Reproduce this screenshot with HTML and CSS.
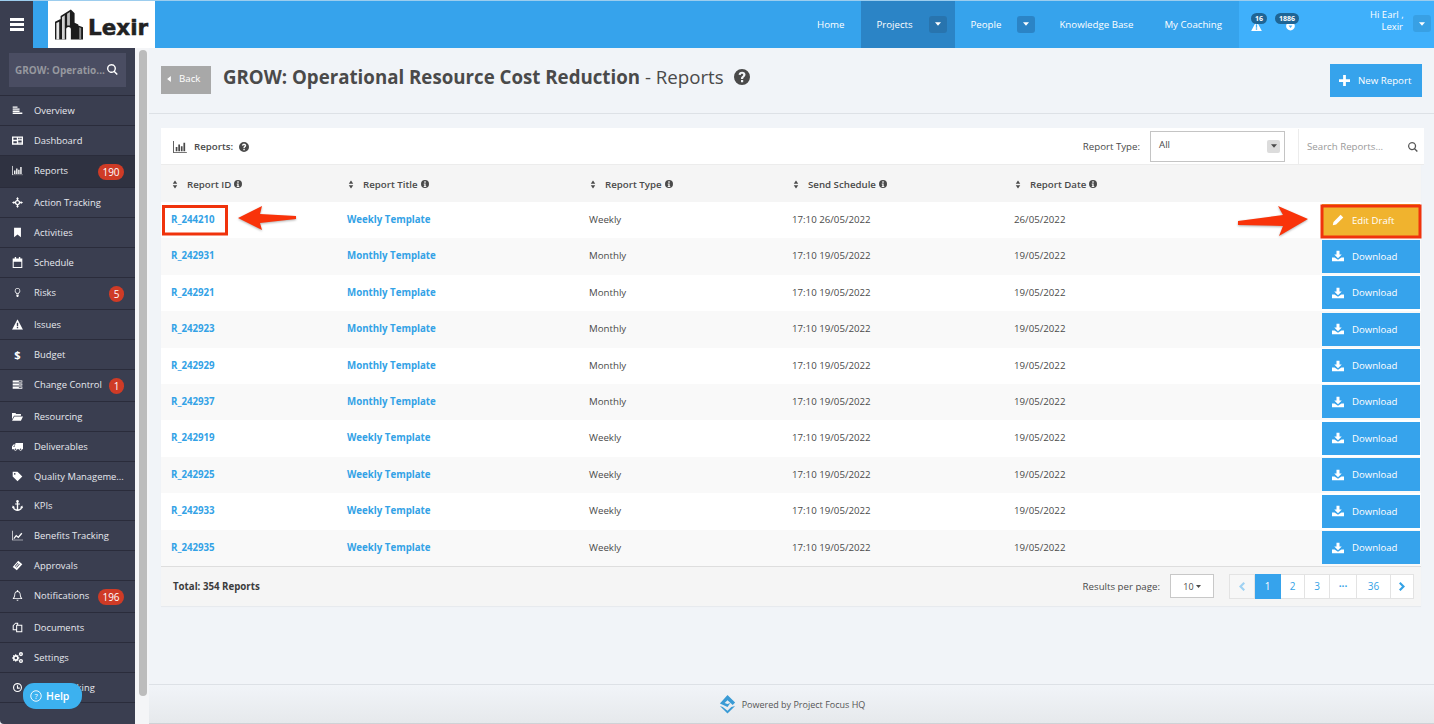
FILE: index.html
```html
<!DOCTYPE html>
<html lang="en">
<head>
<meta charset="utf-8">
<title>Reports</title>
<link rel="stylesheet" href="styles.css">
</head>
<body>
<svg class="sprite" width="0" height="0">
  <symbol id="i-info" viewBox="0 0 16 16"><path fill-rule="evenodd" d="M8 0a8 8 0 1 1 0 16A8 8 0 0 1 8 0zM6.500 2.500v3h3v-3zM5.500 7v2h1.200v3H5.500v2h5v-2H9.300V7z"/></symbol>
  <symbol id="i-help" viewBox="0 0 16 16"><path fill-rule="evenodd" d="M8 0a8 8 0 1 1 0 16A8 8 0 0 1 8 0zM7 11v2.200h2.200V11zM8.100 2.800c-2 0-3.300 1-3.500 2.900l2.100.3c.1-.9.600-1.300 1.300-1.300s1.200.4 1.200 1c0 1.300-2.300 1.400-2.200 4.300h2.100c0-1.900 2.400-2 2.400-4.400 0-1.700-1.500-2.800-3.400-2.800z"/></symbol>
  <symbol id="i-sort" viewBox="0 0 10 16"><path d="M5 1l4 5.500H1zM5 15l-4-5.500h8z"/></symbol>
  <symbol id="i-bars" viewBox="0 0 16 14"><path d="M0 0h1v13h15v1H0zM3 7h2v5H3zM6 4h2v8H6zM9 6h2v6H9zM12 2h2v10h-2z"/></symbol>
  <symbol id="i-search" viewBox="0 0 16 16"><path fill-rule="evenodd" d="M6.500 0a6.500 6.500 0 0 1 5.200 10.400l4 4-1.500 1.500-4-4A6.500 6.500 0 1 1 6.500 0zm0 2a4.500 4.500 0 1 0 0 9 4.500 4.500 0 0 0 0-9z"/></symbol>
  <symbol id="i-download" viewBox="0 0 16 16"><path d="M6 1h4v5h3L8 11 3 6h3zM0 10h3.500L8 13l4.500-3H16v5H0z"/></symbol>
  <symbol id="i-caret" viewBox="0 0 10 6"><path d="M0 0h10L5 6z"/></symbol>
  <symbol id="i-warn" viewBox="0 0 16 15"><path fill-rule="evenodd" d="M8 0l8 15H0zM7 5v5h2V5zm0 6v2h2v-2z"/></symbol>
</svg>

<div class="app">
  <header class="topbar">
    <button class="burger" aria-label="Menu"><span></span><span></span><span></span></button>
    <div class="logo-gap"></div>
    <div class="logo">
      <svg class="logo-mark" viewBox="0 0 30 32">
        <defs><linearGradient id="lg" x1="0" x2="1" y1="0" y2="0"><stop offset="0" stop-color="#eeeeee"/><stop offset="1" stop-color="#8a8a8a"/></linearGradient></defs>
        <path fill="#1c1c1c" d="M0 13l6-3v22H0zM6 7L17 0l4 4v28h-4V21c0-3-5-3-5 0v11H6zM21 14l4 2v16h-4zM25 17l5 2v13h-5z"/>
        <path fill="url(#lg)" d="M1.500 14.500l3-1.500v19h-3zM7.500 8l3-2v26h-3zM13 4.500l3-2V17h-3zM26 19l2 .7V32h-2z"/>
      </svg>
      <span class="logo-text">Lexir</span>
    </div>
    <nav class="topnav">
      <a class="nav-home">Home</a>
      <a class="nav-projects">Projects<span class="nav-caret"><svg class="caret-svg"><use href="#i-caret"/></svg></span></a>
      <a class="nav-people">People<span class="nav-caret"><svg class="caret-svg"><use href="#i-caret"/></svg></span></a>
      <a class="nav-kb">Knowledge Base</a>
      <a class="nav-coach">My Coaching</a>
    </nav>
    <div class="usernav">
      <div class="alert alert-a">
        <svg class="alert-icon"><use href="#i-warn"/></svg>
        <span class="alert-badge">16</span>
      </div>
      <div class="alert alert-b">
        <svg class="alert-icon" viewBox="0 0 16 16"><path d="M8 1a7 7 0 1 1-.1 14A7 7 0 0 1 8 1zm-3 6l3 4 3-4z"/></svg>
        <span class="alert-badge">1886</span>
      </div>
      <div class="hi">Hi Earl ,<br>Lexir</div>
      <span class="nav-caret user-caret"><svg class="caret-svg"><use href="#i-caret"/></svg></span>
    </div>
  </header>

  <div class="body">
    <aside class="sidebar">
      <div class="side-search"><div class="side-search-box"><span class="side-search-text">GROW: Operatio...</span><svg class="side-search-icon"><use href="#i-search"/></svg></div></div>
      <ul class="menu">
        <li class="item"><svg class="mi" viewBox="0 0 16 16"><path d="M1 2h7v2H1zM1 5h10v2H1zM1 8h10v2H1zM1 11h14v2H1z"/></svg><span class="label">Overview</span></li>
        <li class="item"><svg class="mi" viewBox="0 0 16 16"><path fill-rule="evenodd" d="M0 2h16v12H0zm2 2v3h5V4zm7 0v2h2V4zm3 0v2h2V4zM2 9v3h5V9zm7-1v2h5V8zm0 3v1h5v-1z"/></svg><span class="label">Dashboard</span></li>
        <li class="item item-32 active"><svg class="mi" viewBox="0 0 16 14"><use href="#i-bars"/></svg><span class="label">Reports</span><span class="badge">190</span></li>
        <li class="item"><svg class="mi" viewBox="0 0 16 16"><path fill-rule="evenodd" d="M8 0l2 3H9v1.200A4 4 0 0 1 11.800 7H13V6l3 2-3 2V9h-1.200A4 4 0 0 1 9 11.800V13h1l-2 3-2-3h1v-1.200A4 4 0 0 1 4.200 9H3v1L0 8l3-2v1h1.200A4 4 0 0 1 7 4.200V3H6zM8 6a2 2 0 1 0 0 4 2 2 0 0 0 0-4z"/></svg><span class="label">Action Tracking</span></li>
        <li class="item"><svg class="mi" viewBox="0 0 16 16"><path d="M3 1h10v14l-5-4-5 4z"/></svg><span class="label">Activities</span></li>
        <li class="item"><svg class="mi" viewBox="0 0 16 16"><path fill-rule="evenodd" d="M1 2h3V0h2v2h4V0h2v2h3v14H1zm1.500 5v7.500h11V7z"/></svg><span class="label">Schedule</span></li>
        <li class="item item-32"><svg class="mi mi-small" viewBox="0 0 16 16"><path fill-rule="evenodd" d="M8 0a5 5 0 0 1 3 9c-.6.5-1 1-1 2H6c0-1-.4-1.500-1-2A5 5 0 0 1 8 0zm0 1.500A3.500 3.500 0 0 0 6 8c.7.600 1 1 1.200 1.500h1.600C9 9 9.300 8.600 10 8a3.500 3.500 0 0 0-2-6.500zM6 12h4v2l-1 2H7l-1-2z"/></svg><span class="label">Risks</span><span class="badge badge-round">5</span></li>
        <li class="item"><svg class="mi" viewBox="0 0 16 15"><use href="#i-warn"/></svg><span class="label">Issues</span></li>
        <li class="item"><span class="mi mi-dollar">$</span><span class="label">Budget</span></li>
        <li class="item item-32"><svg class="mi" viewBox="0 0 16 16"><path d="M1 2h14v3H1zM1 6.500h14v3H1zM1 11h14v3H1z"/><path fill="#3a3e50" d="M10 3h4v1h-4zM10 7.500h4v1h-4zM10 12h4v1h-4z"/></svg><span class="label">Change Control</span><span class="badge badge-round">1</span></li>
        <li class="item"><svg class="mi" viewBox="0 0 16 16"><path d="M0 3h5l1 1.500h7V7H3L0 12zM3.500 8H16l-3 6H0z"/></svg><span class="label">Resourcing</span></li>
        <li class="item"><svg class="mi" viewBox="0 0 16 16"><path fill-rule="evenodd" d="M5 3h11v9h-1.500a2 2 0 0 1-4 0H7a2 2 0 0 1-4 0H0V8l2-3h3zM3.500 6L1.500 8.500H4V6zM5 11a1 1 0 1 0 0 2 1 1 0 0 0 0-2zm7.500 0a1 1 0 1 0 0 2 1 1 0 0 0 0-2z"/></svg><span class="label">Deliverables</span></li>
        <li class="item item-29"><svg class="mi" viewBox="0 0 16 16"><path fill-rule="evenodd" d="M1 1h7l7 7-7 7-7-7zM4 3a1.200 1.200 0 1 0 0 2.400A1.200 1.200 0 0 0 4 3z"/></svg><span class="label">Quality Manageme...</span></li>
        <li class="item"><svg class="mi" viewBox="0 0 16 16"><path fill-rule="evenodd" d="M8 0a2 2 0 0 1 1 3.700V5h2.500v1.500H9v7c2 0 3.500-1 4-2.500l-1.500-.5L15 8l1 4-1.300-.4C14 14 11 16 8 16s-6-2-6.700-4.400L0 12l1-4 3.500 2.500L3 11c.5 1.500 2 2.500 4 2.500v-7H4.500V5H7V3.700A2 2 0 0 1 8 0z"/></svg><span class="label">KPIs</span></li>
        <li class="item"><svg class="mi" viewBox="0 0 16 14"><path d="M0 0h1v13h15v1H0z"/><path d="M2 11l4-5 3 2.500L13.500 3 15 4.500 9.300 11 6.300 8.500 3.300 12z"/></svg><span class="label">Benefits Tracking</span></li>
        <li class="item"><svg class="mi" viewBox="0 0 16 16"><path fill-rule="evenodd" d="M9 1l6 5-8 9-6-5zM8.500 4L4 9l.8.700 4.500-5zm2 1.500L6 10.500l.8.700 4.500-5z"/></svg><span class="label">Approvals</span></li>
        <li class="item item-32"><svg class="mi" viewBox="0 0 16 16"><path fill-rule="evenodd" d="M8 0c.6 0 1 .4 1 1v.7c2 .4 3.500 2.200 3.500 4.300 0 4 2.500 5.500 2.500 7H1c0-1.500 2.500-3 2.500-7 0-2.100 1.500-3.900 3.500-4.300V1c0-.6.400-1 1-1zm0 3C6.300 3 4.700 4.300 4.700 6c0 3-1 4.700-1.800 6h10.200c-.8-1.300-1.800-3-1.800-6 0-1.700-1.600-3-3.300-3zM6.500 14h3a1.500 1.500 0 0 1-3 0z"/></svg><span class="label">Notifications</span><span class="badge">196</span></li>
        <li class="item"><svg class="mi" viewBox="0 0 16 16"><path fill-rule="evenodd" d="M5 1h4v3h6v11H6v-3H1V5zM5 2.500L2.500 5.500V10.500H6V4h1.500V2.500zM7.500 5.500v8h6v-8z"/></svg><span class="label">Documents</span></li>
        <li class="item"><svg class="mi" viewBox="0 0 16 16"><path fill-rule="evenodd" d="M5 3l1 .3.400 1.200 1.100.5 1.200-.5.900.9-.5 1.200.5 1.100 1.200.4v1.300l-1.200.4-.5 1.100.5 1.200-.9.900-1.200-.5-1.100.5-.4 1.200H5l-.4-1.200-1.100-.5-1.200.5-.9-.9.5-1.200-.5-1.100L.2 9.400V8.100l1.200-.4.500-1.100-.5-1.200.9-.9 1.200.5 1.100-.5zM5.600 7a1.800 1.800 0 1 0 0 3.600 1.800 1.800 0 0 0 0-3.600zM13 0a3 3 0 1 1 0 6 3 3 0 0 1 0-6zm0 2a1 1 0 1 0 0 2 1 1 0 0 0 0-2zM13 10a3 3 0 1 1 0 6 3 3 0 0 1 0-6zm0 2a1 1 0 1 0 0 2 1 1 0 0 0 0-2z"/></svg><span class="label">Settings</span></li>
        <li class="item"><svg class="mi mi-small" viewBox="0 0 16 16"><path fill-rule="evenodd" d="M8 0a8 8 0 1 1 0 16A8 8 0 0 1 8 0zm0 2a6 6 0 1 0 0 12A6 6 0 0 0 8 2zM7 4h2v4h3v2H7z"/></svg><span class="label">Time Tracking</span></li>
      </ul>
    </aside>
    <div class="scroll-track"><div class="scroll-thumb"></div></div>

    <main class="main">
      <div class="page-head">
        <a class="back"><svg class="back-tri" viewBox="0 0 5 8"><path d="M5 0v8L0 4z"/></svg>Back</a>
        <h1 class="title"><b>GROW: Operational Resource Cost Reduction</b> - Reports<svg class="title-help"><use href="#i-help"/></svg></h1>
        <a class="new-report"><svg class="plus" viewBox="0 0 12 12"><path d="M4.500 0h3v4.500H12v3H7.500V12h-3V7.500H0v-3h4.500z"/></svg>New Report</a>
      </div>

      <section class="card">
        <div class="card-top">
          <svg class="bars"><use href="#i-bars"/></svg>
          <span class="card-title">Reports:</span>
          <svg class="card-help"><use href="#i-help"/></svg>
          <span class="type-label">Report Type:</span>
          <div class="type-select"><span>All</span><span class="type-arrow"><svg class="type-caret"><use href="#i-caret"/></svg></span></div>
          <div class="search"><span class="search-ph">Search Reports...</span><svg class="search-icon"><use href="#i-search"/></svg></div>
        </div>

        <div class="row head">
          <div class="th"><svg class="sort"><use href="#i-sort"/></svg>Report ID<svg class="info"><use href="#i-info"/></svg></div>
          <div class="th"><svg class="sort"><use href="#i-sort"/></svg>Report Title<svg class="info"><use href="#i-info"/></svg></div>
          <div class="th"><svg class="sort"><use href="#i-sort"/></svg>Report Type<svg class="info"><use href="#i-info"/></svg></div>
          <div class="th"><svg class="sort"><use href="#i-sort"/></svg>Send Schedule<svg class="info"><use href="#i-info"/></svg></div>
          <div class="th"><svg class="sort"><use href="#i-sort"/></svg>Report Date<svg class="info"><use href="#i-info"/></svg></div>
          <div></div>
        </div>

        <div class="row"><a class="cell link">R_244210</a><a class="cell link">Weekly Template</a><span class="cell">Weekly</span><span class="cell">17:10 26/05/2022</span><span class="cell">26/05/2022</span><a class="btn btn-edit"><svg class="btn-icon" viewBox="0 0 16 16"><path d="M11.500 1l3.500 3.500-9.500 9.500L1 15l1-4.500z"/></svg>Edit Draft</a></div>
        <div class="row"><a class="cell link">R_242931</a><a class="cell link">Monthly Template</a><span class="cell">Monthly</span><span class="cell">17:10 19/05/2022</span><span class="cell">19/05/2022</span><a class="btn"><svg class="btn-icon"><use href="#i-download"/></svg>Download</a></div>
        <div class="row"><a class="cell link">R_242921</a><a class="cell link">Monthly Template</a><span class="cell">Monthly</span><span class="cell">17:10 19/05/2022</span><span class="cell">19/05/2022</span><a class="btn"><svg class="btn-icon"><use href="#i-download"/></svg>Download</a></div>
        <div class="row"><a class="cell link">R_242923</a><a class="cell link">Monthly Template</a><span class="cell">Monthly</span><span class="cell">17:10 19/05/2022</span><span class="cell">19/05/2022</span><a class="btn"><svg class="btn-icon"><use href="#i-download"/></svg>Download</a></div>
        <div class="row"><a class="cell link">R_242929</a><a class="cell link">Monthly Template</a><span class="cell">Monthly</span><span class="cell">17:10 19/05/2022</span><span class="cell">19/05/2022</span><a class="btn"><svg class="btn-icon"><use href="#i-download"/></svg>Download</a></div>
        <div class="row"><a class="cell link">R_242937</a><a class="cell link">Monthly Template</a><span class="cell">Monthly</span><span class="cell">17:10 19/05/2022</span><span class="cell">19/05/2022</span><a class="btn"><svg class="btn-icon"><use href="#i-download"/></svg>Download</a></div>
        <div class="row"><a class="cell link">R_242919</a><a class="cell link">Weekly Template</a><span class="cell">Weekly</span><span class="cell">17:10 19/05/2022</span><span class="cell">19/05/2022</span><a class="btn"><svg class="btn-icon"><use href="#i-download"/></svg>Download</a></div>
        <div class="row"><a class="cell link">R_242925</a><a class="cell link">Weekly Template</a><span class="cell">Weekly</span><span class="cell">17:10 19/05/2022</span><span class="cell">19/05/2022</span><a class="btn"><svg class="btn-icon"><use href="#i-download"/></svg>Download</a></div>
        <div class="row"><a class="cell link">R_242933</a><a class="cell link">Weekly Template</a><span class="cell">Weekly</span><span class="cell">17:10 19/05/2022</span><span class="cell">19/05/2022</span><a class="btn"><svg class="btn-icon"><use href="#i-download"/></svg>Download</a></div>
        <div class="row"><a class="cell link">R_242935</a><a class="cell link">Weekly Template</a><span class="cell">Weekly</span><span class="cell">17:10 19/05/2022</span><span class="cell">19/05/2022</span><a class="btn"><svg class="btn-icon"><use href="#i-download"/></svg>Download</a></div>

        <div class="card-foot">
          <span class="total">Total: 354 Reports</span>
          <span class="rpp">Results per page:</span>
          <div class="rpp-select">10<svg class="rpp-caret"><use href="#i-caret"/></svg></div>
          <div class="pager">
            <a class="pg pg-prev"><svg class="chev" viewBox="0 0 8 12"><path d="M6 0l2 2-4 4 4 4-2 2-6-6z"/></svg></a>
            <a class="pg pg-1 current">1</a>
            <a class="pg pg-2">2</a>
            <a class="pg pg-3">3</a>
            <a class="pg pg-dots">···</a>
            <a class="pg pg-36">36</a>
            <a class="pg pg-next"><svg class="chev" viewBox="0 0 8 12"><path d="M2 0l6 6-6 6-2-2 4-4-4-4z"/></svg></a>
          </div>
        </div>
      </section>

      <footer class="foot">
        <svg class="foot-logo" viewBox="0 0 20 20"><path fill="#3a9bd5" d="M10 0l8 8-2.500 2.500L10 5.500 7 8.500l3 1 3-1-3 4-8-3.500zM2 11.500l3 1 5 4 4-4 4-1-8 8z"/></svg>
        <span>Powered by Project Focus HQ</span>
      </footer>
    </main>
  </div>
</div>

<svg class="annot" viewBox="0 0 1434 724">
  <g fill="none" stroke="#f0330c" stroke-width="3">
    <rect x="163.500" y="206.500" width="63" height="27.500"/>
    <rect x="1322" y="206" width="98" height="31"/>
  </g>
  <g fill="#f9330a" class="arrows">
    <path d="M238 218L262 206L260 214L296 216L296 219L260 223L262 230Z"/>
    <path d="M1308 219L1278 206L1283 215L1238 221L1238 225L1283 226L1279 236Z"/>
  </g>
</svg>
<a class="help"><svg class="help-icon" viewBox="0 0 16 16"><circle cx="8" cy="8" r="7" fill="none" stroke="#fff" stroke-width="1.200"/><text x="8" y="11.500" class="help-q">?</text></svg>Help</a>
</body>
</html>
```

FILE: styles.css
```css
* { box-sizing: border-box; }
html, body { margin: 0; padding: 0; height: 100%; }
body {
  width: 1434px; height: 724px; overflow: hidden; position: relative;
  font-family: "Open Sans", "Liberation Sans", sans-serif;
  font-size: 9.700px; color: #4a4a4a; background: #f1f4f8;
}
a { color: inherit; text-decoration: none; }
.sprite { position: absolute; }
svg { fill: currentColor; display: block; flex: none; }

.app { height: 724px; display: flex; flex-direction: column; }

/* top bar */
.topbar {
  height: 48px; flex: none; display: flex; background: #36a3ec; color: #fff;
  border-top: 1px solid #9ccdee;
}
.burger {
  width: 33px; background: #3a3e50; border: 0; padding: 0 0 0 10px;
  display: flex; flex-direction: column; justify-content: center; gap: 2.500px;
}
.burger span { display: block; width: 14px; height: 2.500px; background: #fff; }
.logo-gap { width: 15px; }
.logo { width: 107px; background: #fff; display: flex; align-items: flex-start; padding: 8px 0 0 7px; color: #222; }
.logo-mark { width: 28px; height: 31px; }
.logo-text {
  font-family: "DejaVu Sans", sans-serif; font-weight: 700; font-size: 21.500px; line-height: 24px;
  margin: 7px 0 0 5px; -webkit-text-stroke: .5px #222;
}
.topnav { display: flex; align-items: stretch; margin-left: auto; font-size: 9.700px; }
.topnav a { display: flex; align-items: center; padding-bottom: 1px; }
.nav-home { padding-right: 17px; }
.nav-projects { width: 94px; padding-left: 15px; background: #2b84c6; justify-content: space-between; padding-right: 8px; }
.nav-people { margin-left: 15px; width: 65px; justify-content: space-between; }
.nav-kb { margin-left: 24px; }
.nav-coach { margin-left: 31px; margin-right: 17px; }
.nav-caret {
  width: 18px; height: 17px; border-radius: 3px; background: #2b84c6;
  display: flex; align-items: center; justify-content: center;
}
.nav-projects .nav-caret { background: #2874ae; }
.caret-svg { width: 6px; height: 4px; }
.usernav { width: 195px; background: #3fb0fb; display: flex; align-items: flex-start; }
.alert { position: relative; height: 47px; }
.alert-a { width: 46px; }
.alert-b { width: 85px; }
.alert-icon { position: absolute; top: 20px; width: 11px; height: 10px; }
.alert-a .alert-icon { left: 12px; }
.alert-b .alert-icon { left: 0; }
.alert-badge {
  position: absolute; top: 12px; height: 11px; padding: 0 4px; border-radius: 6px;
  background: #1f6595; font-size: 7px; font-weight: 700; line-height: 11px; color: #fff;
}
.alert-a .alert-badge { left: 12px; }
.alert-b .alert-badge { left: -10px; }
.hi { width: 33px; margin-left: 0; padding-top: 8px; font-size: 9.500px; line-height: 12px; text-align: right; white-space: nowrap; flex: none; }
.user-caret { margin: 14px 0 0 10px; background: #38a0e4; }

/* body */
.body { flex: 1; display: flex; min-height: 0; }
.sidebar { width: 135px; flex: none; background: #3a3e50; color: #e6e8ee; border-bottom-left-radius: 4px; }
.side-search { height: 48px; padding: 5px 9px 0; border-bottom: 1px solid #2a2c3b; }
.side-search-box {
  height: 34px; background: #4a4d62; display: flex; align-items: center;
  padding-left: 6px; font-weight: 700; font-size: 10px; color: #96989f; white-space: nowrap; position: relative;
}
.side-search-icon { position: absolute; left: 98px; top: 11px; width: 11px; height: 11px; color: #fff; }
.menu { list-style: none; margin: 0; padding: 0; }
.item {
  height: 30px; display: flex; align-items: flex-start; border-bottom: 1px solid #2a2c3b;
  padding-left: 12px; position: relative;
}
.item-29 { height: 29px; }
.item-32 { height: 32px; }
.active { background: #2f3241; }
.mi { width: 11px; height: 11px; margin-top: 9px; color: #fff; }
.mi-small { padding: 1px; }
.mi-dollar { font-size: 11px; line-height: 11px; font-weight: 700; text-align: center; display: block; }
.label { margin-left: 11px; line-height: 29px; font-size: 9.400px; white-space: nowrap; }
.badge {
  position: absolute; right: 11px; top: 50%; transform: translateY(-50%);
  height: 16px; min-width: 26px; padding: 0 4px; border-radius: 8px; background: #cf3b26; color: #fff;
  font-size: 10px; line-height: 16px; text-align: center;
}
.badge-round { min-width: 15px; width: 15px; padding: 0; }

.scroll-track { width: 14px; flex: none; padding: 2px 2px 0 4px; background: #f4f5f7; }
.scroll-thumb { width: 8px; height: 646px; background: #bcbcbc; border-radius: 4px; }

/* main */
.main { flex: 1; min-width: 0; display: flex; flex-direction: column; }
.page-head {
  height: 66px; flex: none; display: flex; align-items: flex-start; padding: 0 12px;
  border-bottom: 1px solid #dde1e6;
}
.back {
  width: 50px; height: 28px; margin-top: 18px; background: #a8a8a8; color: #fff; font-size: 9.700px;
  display: flex; align-items: center; padding: 0 0 3px 6px;
}
.back-tri { width: 4px; height: 6px; margin-right: 8px; }
.title {
  margin: 16px 0 0 12px; font-size: 18.700px; line-height: 26px; font-weight: 400; color: #4a4a4a;
  display: flex; align-items: center; white-space: pre;
}
.title b { font-weight: 700; }
.title-help { width: 16px; height: 16px; margin-left: 10px; }
.new-report {
  margin: 16px 0 0 auto; width: 92px; height: 33px; background: #36a3ec; color: #fff; font-size: 9.700px;
  display: flex; align-items: center; padding: 0 0 1px 9px;
}
.plus { width: 11px; height: 11px; margin-right: 8px; }

.card { width: 1260px; margin: 14px 0 0 12px; background: #f5f5f5; box-shadow: 0 1px 1px rgba(0,0,0,.04); }
.card-top {
  width: 1263px; height: 37px; background: #fff; display: flex; align-items: center; padding: 1px 0 0 12px;
  border-bottom: 1px solid #ececec; font-size: 9.700px;
}
.bars { width: 14px; height: 12px; }
.card-title { margin-left: 7px; font-weight: 600; }
.card-help { width: 10px; height: 10px; margin-left: 6px; }
.type-label { margin-left: auto; }
.type-select {
  width: 135px; height: 31px; margin: -1px 0 0 10px; border: 1px solid #c4c4c4; background: #fff;
  display: flex; align-items: flex-start; justify-content: space-between; padding: 6px 4px 0 8px;
}
.type-arrow { width: 13px; height: 13px; border-radius: 2px; background: #dcdcdc; display: flex; align-items: center; justify-content: center; margin-top: 2px; }
.type-caret { width: 6px; height: 4px; }
.search {
  width: 126px; height: 36px; margin-left: 13px; border-left: 1px solid #ececec;
  display: flex; align-items: center; padding-left: 8px; position: relative;
}
.search-ph { color: #9a9a9a; }
.search-icon { position: absolute; right: 6px; top: 13px; width: 10px; height: 10px; color: #555; }

.row {
  height: 36.400px; display: grid; grid-template-columns: 176px 242px 203px 222px 308px 98px;
  padding-left: 10px; align-items: start; background: #fff; font-size: 9.700px;
}
.row:nth-of-type(even) { background: #f9f9f9; }
.row.head { height: 37px; padding-top: 1px; background: #f5f5f5; align-items: center; font-weight: 600; }
.th { display: flex; align-items: center; }
.sort { width: 6px; height: 9px; margin: 0 9px 0 1px; }
.info { width: 8px; height: 8px; margin-left: 3px; }
.cell { line-height: 35.500px; }
.link { color: #33a2e6; font-weight: 700; }
.btn {
  height: 33px; margin-top: 1.500px; background: #36a3ec; color: #fff; font-size: 9.600px;
  display: flex; align-items: center; padding-left: 10px;
}
.btn-edit { background: #f0b32e; }
.btn-icon { width: 12px; height: 12px; margin-right: 8px; }

.card-foot {
  height: 40px; background: #f5f5f5; border-top: 1px solid #dedede; display: flex; align-items: center;
  padding-left: 12px; font-size: 9.700px;
}
.total { font-weight: 700; color: #3c3c3c; }
.rpp { margin-left: auto; }
.rpp-select {
  width: 44px; height: 24px; margin-left: 10px; border: 1px solid #c8c8c8; background: #fff;
  display: flex; align-items: center; justify-content: center; gap: 2px; font-size: 9px;
}
.rpp-caret { width: 5px; height: 3px; }
.pager { display: flex; height: 25px; margin: 0 7px 0 15px; }
.pg {
  background: #fff; border: 1px solid #e3e3e3; border-left-width: 0; color: #33a2e6;
  display: flex; align-items: center; justify-content: center; font-size: 10px;
}
.pg-prev { width: 26px; border-left-width: 1px; background: #f7f7f7; color: #9fd2f3; }
.pg-1 { width: 26px; }
.pg-2 { width: 24px; }
.pg-3 { width: 25px; }
.pg-dots { width: 27px; font-weight: 700; }
.pg-36 { width: 34px; }
.pg-next { width: 23px; }
.current { background: #36a3ec; border-color: #36a3ec; color: #fff; }
.chev { width: 6px; height: 9px; }

.foot {
  margin-top: auto; height: 40px; display: flex; align-items: center; justify-content: center; gap: 5px;
  border-top: 1px solid #dde1e6; border-bottom: 1px solid #cfd2d6;
  background: linear-gradient(#f1f4f8, #e6e9ec); font-size: 9px; color: #555;
}
.foot-logo { width: 19px; height: 19px; }

/* overlays */
.annot { position: absolute; left: 0; top: 0; width: 1434px; height: 724px; pointer-events: none; }
.arrows { filter: drop-shadow(0 1px 1px rgba(0,0,0,.3)); }
.help {
  position: absolute; left: 23px; top: 683px; width: 59px; height: 26px; border-radius: 11px 11px 13px 13px;
  background: #3cb1ef; color: #fff; font-size: 10.500px; font-weight: 600;
  display: flex; align-items: center; padding-left: 7px;
}
.help-icon { width: 12px; height: 12px; margin-right: 4px; }
.help-q { font-size: 10px; fill: #fff; text-anchor: middle; font-weight: 400; }
```
